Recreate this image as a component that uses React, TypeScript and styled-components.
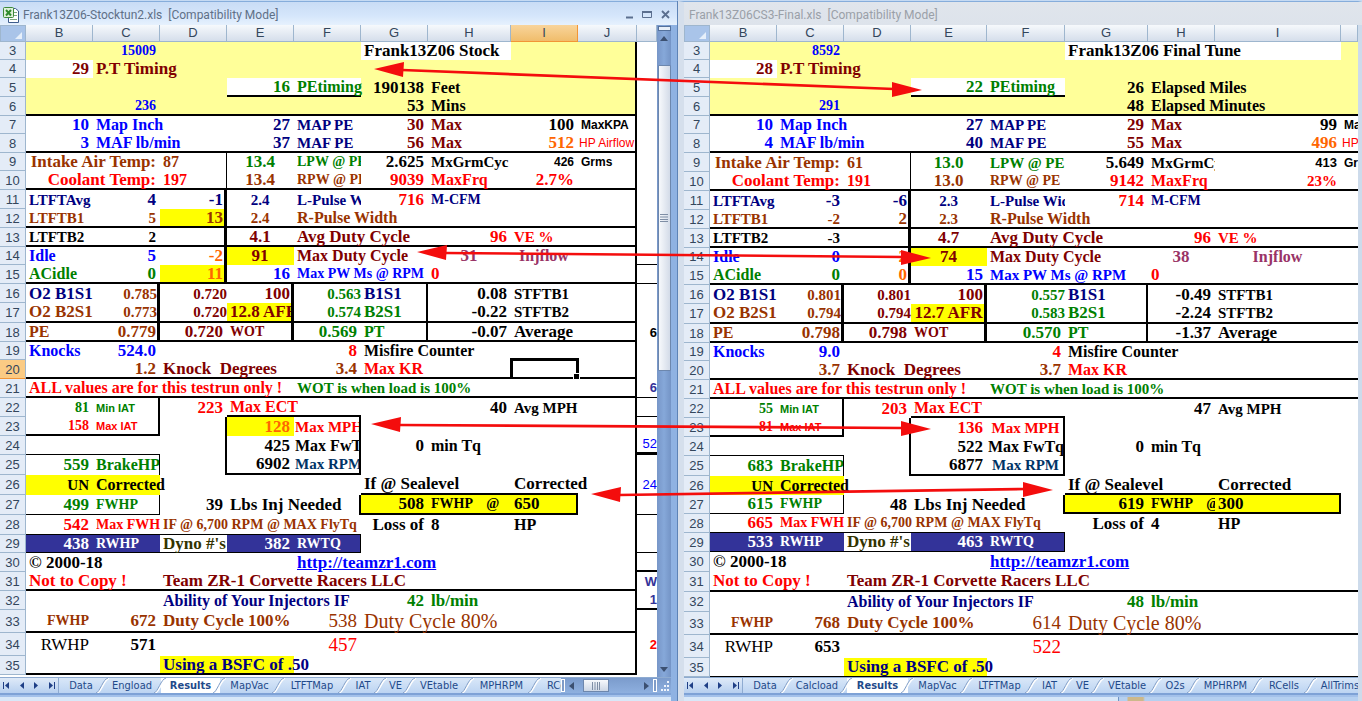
import React from 'react';
import styled, { createGlobalStyle, css } from 'styled-components';

const Global = createGlobalStyle`
  * { box-sizing: border-box; }
  html, body { margin: 0; padding: 0; background: #d5e5f7; }
  body { font-family: "DejaVu Sans Condensed", "DejaVu Sans", sans-serif; overflow: hidden; }
`;

/* ---------- palette ---------- */
const C = {
  blue: '#0000ff',
  navy: '#000080',
  deep: '#003366',
  maroon: '#800000',
  brown: '#993300',
  green: '#008000',
  red: '#ff0000',
  orange: '#ff6600',
  plum: '#993366',
  olive: '#333300',
  indigo: '#333399',
  black: '#000000',
  white: '#ffffff',
  pale: '#ffff99',
  yellow: '#ffff00',
};

/* ---------- sheet model ---------- */
type Align = 'left' | 'right' | 'center';
interface Cell {
  text: string;
  color: string;
  size: number;
  align: Align;
  weight?: number;
  sans?: boolean;
  clip?: boolean;
  span?: number;
  flush?: boolean;
  href?: string;
}
type Extra = Partial<Cell>;
interface Row {
  n: number;
  h: number;
  cells: Record<string, Cell>;
}
type Edge = [range: string, side: 'right' | 'bottom', width: number];
interface Sheet {
  columns: number[];
  rows: Row[];
  fills: [string, string][];
  edges: Edge[];
  selected?: string;
}

const num = (text: string, color = C.black, extra: Extra = {}): Cell => ({ text, color, size: 17, align: 'right', ...extra });
const txt = (text: string, color = C.black, extra: Extra = {}): Cell => ({ text, color, size: 16, align: 'left', ...extra });
const mid = (text: string, color = C.black, extra: Extra = {}): Cell => ({ text, color, size: 17, align: 'center', ...extra });

const LETTERS = 'BCDEFGHIJK';
const S17: Extra = { size: 17 };
const S15: Extra = { size: 15 };
const S14: Extra = { size: 14 };
const VOLT: Extra = { size: 15, flush: true };
const LABEL: Extra = { size: 11, sans: true };
const UNIT: Extra = { size: 12, sans: true, clip: true };
const THIN: Extra = { size: 12, sans: true, weight: 400, clip: true, flush: true };
const SIDE: Extra = { size: 13, sans: true, align: 'right', flush: true };
const BIG: Extra = { size: 19, weight: 400 };
const LINK = 'http://teamzr1.com';

const expand = (range: string): string[] => {
  const [a, b = a] = range.split(':');
  const out: string[] = [];
  for (let r = Number(a.slice(1)); r <= Number(b.slice(1)); r++) {
    for (let c = LETTERS.indexOf(a[0]); c <= LETTERS.indexOf(b[0]); c++) out.push(LETTERS[c] + r);
  }
  return out;
};

const buildRows = (heights: number[], data: Record<number, Record<string, Cell>>): Row[] =>
  heights.map((h, i) => ({ n: i + 3, h, cells: data[i + 3] || {} }));

const sharedFills: [string, string][] = [
  ['B3:J6', C.pale],
  ['B4', C.white],
  ['E5:F5', C.white],
  ['E14', C.yellow],
  ['E17', C.yellow],
  ['B26:C26', C.yellow],
  ['G27:I27', C.yellow],
  ['B29:C29', C.indigo],
  ['E29:F29', C.indigo],
  ['D35:E35', C.yellow],
];

const sharedEdges: Edge[] = [
  ['E5:F5', 'bottom', 2],
  ['B6:J6', 'bottom', 2],
  ['B8:J8', 'bottom', 2],
  ['D9:D10', 'right', 1],
  ['B10:J10', 'bottom', 2],
  ['D11:D15', 'right', 3],
  ['B12:J12', 'bottom', 2],
  ['B13:J13', 'bottom', 2],
  ['B15:J15', 'bottom', 2],
  ['C16:C18', 'right', 3],
  ['E16:E18', 'right', 3],
  ['G16:G18', 'right', 2],
  ['B17:J17', 'bottom', 2],
  ['B18:J18', 'bottom', 2],
  ['B20:J20', 'bottom', 2],
  ['B21:J21', 'bottom', 2],
  ['C22:C23', 'right', 2],
  ['E22:F22', 'bottom', 2],
  ['B23:C23', 'bottom', 2],
  ['D23:D25', 'right', 2],
  ['F23:F25', 'right', 2],
  ['E25:F25', 'bottom', 2],
  ['B24:C24', 'bottom', 1],
  ['C25', 'right', 1],
  ['C27', 'right', 1],
  ['B27:C27', 'bottom', 1],
  ['G26:I26', 'bottom', 2],
  ['F27', 'right', 2],
  ['G27:I27', 'bottom', 2],
  ['I27', 'right', 2],
  ['B28:F28', 'bottom', 1],
  ['B29:F29', 'bottom', 1],
  ['F29', 'right', 1],
  ['B31:J31', 'bottom', 2],
  ['B33:J33', 'bottom', 2],
];

const stock: Sheet = {
  columns: [67, 67, 67, 67, 67, 67, 83, 67, 59],
  selected: 'I20',
  fills: [...sharedFills, ['G3:H3', C.white], ['D12', C.yellow], ['D15', C.yellow], ['E23', C.yellow]],
  edges: [
    ...sharedEdges,
    ['J3:J35', 'right', 2],
    ['B35:J35', 'bottom', 2],
    ['K14:K15', 'bottom', 1],
    ['K21:K22', 'bottom', 1],
    ['K24', 'bottom', 3],
    ['K27', 'bottom', 1],
    ['K29', 'bottom', 1],
    ['K30', 'bottom', 2],
    ['K32', 'bottom', 2],
  ],
  rows: buildRows(
    [18, 18, 19, 19, 18, 19, 18, 19, 19, 19, 19, 18, 19, 19, 20, 19, 18, 19, 19, 19, 19, 19, 20, 20, 20, 20, 18, 19, 19, 19, 23, 23, 19],
    {
      3: { C: num('15009', C.blue, S14), G: txt('Frank13Z06 Stock', C.black, S17) },
      4: { B: num('29', C.maroon), C: txt('P.T Timing', C.maroon, S17) },
      5: { E: num('16', C.green), F: txt('PEtiming', C.green), G: num('190138'), H: txt('Feet') },
      6: { C: num('236', C.blue, S14), G: num('53'), H: txt('Mins') },
      7: { B: num('10', C.blue), C: txt('Map Inch', C.blue), E: num('27', C.navy), F: txt('MAP PE', C.navy, S15), G: num('30', C.maroon), H: txt('Max', C.maroon), I: num('100'), J: txt('MaxKPA', C.black, UNIT) },
      8: { B: num('3', C.blue), C: txt('MAF lb/min', C.blue), E: num('37', C.navy), F: txt('MAF PE', C.navy, S15), G: num('56', C.maroon), H: txt('Max', C.maroon), I: num('512', C.orange), J: txt('HP Airflow', C.red, THIN) },
      9: { B: num('Intake Air Temp:', C.brown, { span: 2 }), D: txt('87', C.brown), E: mid('13.4', C.green), F: txt('LPW @ PE', C.green, { size: 14, clip: true }), G: num('2.625'), H: txt('MxGrmCyc', C.black, S15), I: num('426', C.black, { size: 12, sans: true }), J: txt('Grms', C.black, UNIT) },
      10: { B: num('Coolant Temp:', C.red, { span: 2 }), D: txt('197', C.red), E: mid('13.4', C.brown), F: txt('RPW @ PE', C.brown, { size: 14, clip: true }), G: num('9039', C.red), H: txt('MaxFrq', C.red), I: num('2.7%', C.red) },
      11: { B: txt('LTFTAvg', C.navy, S15), C: num('4', C.navy), D: num('-1', C.navy), E: mid('2.4', C.navy, S15), F: txt('L-Pulse Width', C.navy, { size: 15, clip: true }), G: num('716', C.red), H: txt('M-CFM', C.navy, S14) },
      12: { B: txt('LTFTB1', C.brown, S15), C: num('5', C.brown, S15), D: num('13', C.brown), E: mid('2.4', C.brown, S15), F: txt('R-Pulse Width', C.brown) },
      13: { B: txt('LTFTB2', C.black, S15), C: num('2', C.black, S15), E: mid('4.1', C.maroon), F: txt('Avg Duty Cycle', C.maroon, S17), H: num('96', C.red), I: txt('VE %', C.red, S15) },
      14: { B: txt('Idle', C.blue), C: num('5', C.blue), D: num('-2', C.orange), E: mid('91', C.maroon), F: txt('Max Duty Cycle', C.maroon), H: mid('31', C.plum), I: mid('Injflow', C.plum, { size: 16 }) },
      15: { B: txt('ACidle', C.green), C: num('0', C.green), D: num('11', C.orange), E: num('16', C.blue), F: txt('Max PW Ms @ RPM', C.blue, S14), H: txt('0', C.red, S17) },
      16: { B: txt('O2 B1S1', C.navy, S17), C: num('0.785', C.brown, VOLT), D: num('0.720', C.maroon, VOLT), E: num('100', C.maroon), F: num('0.563', C.green, VOLT), G: txt('B1S1', C.navy, S17), H: num('0.08'), I: txt('STFTB1', C.black, S15) },
      17: { B: txt('O2 B2S1', C.brown, S17), C: num('0.773', C.brown, VOLT), D: num('0.720', C.maroon, VOLT), E: txt('12.8 AFR', C.maroon, { size: 17, clip: true }), F: num('0.574', C.green, VOLT), G: txt('B2S1', C.green, S17), H: num('-0.22'), I: txt('STFTB2', C.black, S15) },
      18: { B: txt('PE', C.brown), C: num('0.779', C.brown), D: num('0.720', C.maroon), E: txt('WOT', C.maroon, S14), F: num('0.569', C.green), G: txt('PT', C.green), H: num('-0.07'), I: txt('Average', C.black, S17), K: txt('6', C.black, SIDE) },
      19: { B: txt('Knocks', C.blue), C: num('524.0', C.blue), F: num('8', C.red), G: txt('Misfire Counter') },
      20: { C: num('1.2', C.brown), D: txt('Knock  Degrees', C.maroon, S17), F: num('3.4', C.brown), G: txt('Max KR', C.red) },
      21: { B: txt('ALL values are for this testrun only !', C.red), F: txt('WOT is when load is 100%', C.green, S15), K: txt('6', C.indigo, SIDE) },
      22: { B: num('81', C.green, S14), C: txt('Min IAT', C.green, LABEL), D: num('223', C.red), E: txt('Max ECT', C.red), H: num('40'), I: txt('Avg MPH', C.black, S15) },
      23: { B: num('158', C.red, S14), C: txt('Max IAT', C.red, LABEL), E: num('128', C.orange), F: txt('Max MPH', C.red, { size: 15, clip: true, flush: true }) },
      24: { E: num('425'), F: txt('Max FwTq', C.black, { clip: true, flush: true }), G: num('0'), H: txt('min Tq'), K: txt('52', C.blue, { ...SIDE, weight: 400 }) },
      25: { B: num('559', C.green), C: txt('BrakeHP', C.green, { clip: true }), E: num('6902'), F: txt('Max RPM', C.deep, { size: 15, clip: true, flush: true }) },
      26: { B: num('UN', C.black, S15), C: txt('Corrected'), G: txt('If @ Sealevel', C.black, S17), I: txt('Corrected', C.black, S17), K: txt('24', C.blue, { ...SIDE, weight: 400 }) },
      27: { B: num('499', C.green), C: txt('FWHP', C.green, S14), D: num('39'), E: txt('Lbs Inj Needed', C.black, S17), G: num('508'), H: txt('FWHP    @', C.black, S14), I: txt('650', C.black, S17) },
      28: { B: num('542', C.red), C: txt('Max FWH', C.red, { size: 14, clip: true }), D: txt('IF @ 6,700 RPM @ MAX FlyTq', C.brown, { size: 14, clip: true, span: 3 }), G: num('Loss of'), H: txt('8', C.black, S17), I: txt('HP') },
      29: { B: num('438', C.white), C: txt('RWHP', C.white, S14), D: txt("Dyno #'s", C.olive, { size: 17, clip: true }), E: num('382', C.white), F: txt('RWTQ', C.white, S14) },
      30: { B: txt('© 2000-18', C.black, S17), F: txt(LINK, C.blue, { size: 17, href: LINK }) },
      31: { B: txt('Not to Copy !', C.red, S17), D: txt('Team ZR-1 Corvette Racers LLC', C.maroon, S17), K: txt('W', C.indigo, SIDE) },
      32: { D: txt('Ability of Your Injectors IF', C.navy), G: num('42', C.green), H: txt('lb/min', C.green, S17), K: txt('1', C.indigo, SIDE) },
      33: { B: num('FWHP', C.brown, S14), C: num('672', C.brown), D: txt('Duty Cycle 100%', C.brown, S17), F: num('538', C.brown, BIG), G: txt('Duty Cycle 80%', C.brown, { size: 20, weight: 400 }) },
      34: { B: num('RWHP', C.black, { weight: 400 }), C: num('571'), F: num('457', C.red, BIG), K: txt('2', C.red, SIDE) },
      35: { D: txt('Using a BSFC of .50', C.navy, S17) },
    },
  ),
};

const final: Sheet = {
  columns: [67, 67, 67, 76, 78, 83, 67, 126],
  fills: [...sharedFills, ['G3:I3', C.white]],
  edges: [...sharedEdges, ['B35:J35', 'bottom', 1]],
  rows: buildRows(
    [18, 18, 19, 19, 18, 19, 19, 19, 19, 19, 19, 18, 19, 19, 20, 19, 18, 19, 19, 19, 19, 19, 20, 19, 19, 19, 19, 20, 20, 20, 23, 23, 19],
    {
      3: { C: num('8592', C.blue, S14), G: txt('Frank13Z06 Final Tune', C.black, S17) },
      4: { B: num('28', C.maroon), C: txt('P.T Timing', C.maroon, S17) },
      5: { E: num('22', C.green), F: txt('PEtiming', C.green), G: num('26'), H: txt('Elapsed Miles') },
      6: { C: num('291', C.blue, S14), G: num('48'), H: txt('Elapsed Minutes') },
      7: { B: num('10', C.blue), C: txt('Map Inch', C.blue), E: num('27', C.navy), F: txt('MAP PE', C.navy, S15), G: num('29', C.maroon), H: txt('Max', C.maroon), I: num('99'), J: txt('MaxKPA', C.black, UNIT) },
      8: { B: num('4', C.blue), C: txt('MAF lb/min', C.blue), E: num('40', C.navy), F: txt('MAF PE', C.navy, S15), G: num('55', C.maroon), H: txt('Max', C.maroon), I: num('496', C.orange), J: txt('HP Airflow', C.red, THIN) },
      9: { B: num('Intake Air Temp:', C.brown, { span: 2 }), D: txt('61', C.brown), E: mid('13.0', C.green), F: txt('LPW @ PE', C.green, S15), G: num('5.649'), H: txt('MxGrmCyc', C.black, { size: 15, clip: true }), I: num('413', C.black, { size: 13, sans: true }), J: txt('Grms', C.black, UNIT) },
      10: { B: num('Coolant Temp:', C.red, { span: 2 }), D: txt('191', C.red), E: mid('13.0', C.brown), F: txt('RPW @ PE', C.brown, S14), G: num('9142', C.red), H: txt('MaxFrq', C.red), I: num('23%', C.red, S15) },
      11: { B: txt('LTFTAvg', C.navy, S15), C: num('-3', C.navy), D: num('-6', C.navy), E: mid('2.3', C.navy, S15), F: txt('L-Pulse Width', C.navy, { size: 15, clip: true }), G: num('714', C.red), H: txt('M-CFM', C.navy, S14) },
      12: { B: txt('LTFTB1', C.brown, S15), C: num('-2', C.brown, S15), D: num('2', C.brown), E: mid('2.3', C.brown, S15), F: txt('R-Pulse Width', C.brown) },
      13: { B: txt('LTFTB2', C.black, S15), C: num('-3', C.black, S15), E: mid('4.7', C.maroon), F: txt('Avg Duty Cycle', C.maroon, S17), H: num('96', C.red), I: txt('VE %', C.red, S15) },
      14: { B: txt('Idle', C.blue), C: num('0', C.blue), D: num('2', C.orange), E: mid('74', C.maroon), F: txt('Max Duty Cycle', C.maroon), H: mid('38', C.plum), I: mid('Injflow', C.plum, { size: 16 }) },
      15: { B: txt('ACidle', C.green), C: num('0', C.green), D: num('0', C.orange), E: num('15', C.blue), F: txt('Max PW Ms @ RPM', C.blue, S15), H: txt('0', C.red, S17) },
      16: { B: txt('O2 B1S1', C.navy, S17), C: num('0.801', C.brown, VOLT), D: num('0.801', C.maroon, VOLT), E: num('100', C.maroon), F: num('0.557', C.green, VOLT), G: txt('B1S1', C.navy, S17), H: num('-0.49'), I: txt('STFTB1', C.black, S15) },
      17: { B: txt('O2 B2S1', C.brown, S17), C: num('0.794', C.brown, VOLT), D: num('0.794', C.maroon, VOLT), E: mid('12.7 AFR', C.maroon), F: num('0.583', C.green, VOLT), G: txt('B2S1', C.green, S17), H: num('-2.24'), I: txt('STFTB2', C.black, S15) },
      18: { B: txt('PE', C.brown), C: num('0.798', C.brown), D: num('0.798', C.maroon), E: txt('WOT', C.maroon, S14), F: num('0.570', C.green), G: txt('PT', C.green), H: num('-1.37'), I: txt('Average', C.black, S17) },
      19: { B: txt('Knocks', C.blue), C: num('9.0', C.blue), F: num('4', C.red), G: txt('Misfire Counter') },
      20: { C: num('3.7', C.brown), D: txt('Knock  Degrees', C.maroon, S17), F: num('3.7', C.brown), G: txt('Max KR', C.red) },
      21: { B: txt('ALL values are for this testrun only !', C.red), F: txt('WOT is when load is 100%', C.green, S15) },
      22: { B: num('55', C.green, S14), C: txt('Min IAT', C.green, LABEL), D: num('203', C.red), E: txt('Max ECT', C.red), H: num('47'), I: txt('Avg MPH', C.black, S15) },
      23: { B: num('81', C.red, S14), C: txt('Max IAT', C.red, LABEL), E: num('136', C.red), F: mid('Max MPH', C.red, S15) },
      24: { E: num('522'), F: txt('Max FwTq', C.black, { clip: true, flush: true }), G: num('0'), H: txt('min Tq') },
      25: { B: num('683', C.green), C: txt('BrakeHP', C.green, { clip: true }), E: num('6877'), F: mid('Max RPM', C.deep, S15) },
      26: { B: num('UN', C.black, S15), C: txt('Corrected'), G: txt('If @ Sealevel', C.black, S17), I: txt('Corrected', C.black, S17) },
      27: { B: num('615', C.green), C: txt('FWHP', C.green, S14), D: num('48'), E: txt('Lbs Inj Needed', C.black, S17), G: num('619'), H: txt('FWHP    @', C.black, { size: 14, clip: true }), I: txt('300', C.black, S17) },
      28: { B: num('665', C.red), C: txt('Max FWH', C.red, { size: 14, clip: true }), D: txt('IF @ 6,700 RPM @ MAX FlyTq', C.brown, { size: 14, clip: true, span: 3 }), G: num('Loss of'), H: txt('4', C.black, S17), I: txt('HP') },
      29: { B: num('533', C.white), C: txt('RWHP', C.white, S14), D: txt("Dyno #'s", C.olive, { size: 17, clip: true }), E: num('463', C.white), F: txt('RWTQ', C.white, S14) },
      30: { B: txt('© 2000-18', C.black, S17), F: txt(LINK, C.blue, { size: 17, href: LINK }) },
      31: { B: txt('Not to Copy !', C.red, S17), D: txt('Team ZR-1 Corvette Racers LLC', C.maroon, S17) },
      32: { D: txt('Ability of Your Injectors IF', C.navy), G: num('48', C.green), H: txt('lb/min', C.green, S17) },
      33: { B: num('FWHP', C.brown, S14), C: num('768', C.brown), D: txt('Duty Cycle 100%', C.brown, S17), F: num('614', C.brown, BIG), G: txt('Duty Cycle 80%', C.brown, { size: 20, weight: 400 }) },
      34: { B: num('RWHP', C.black, { weight: 400 }), C: num('653'), F: num('522', C.red, BIG) },
      35: { D: txt('Using a BSFC of .50', C.navy, S17) },
    },
  ),
};

/* ---------- window chrome ---------- */
const Desktop = styled.main`
  position: relative;
  display: grid;
  grid-template-columns: minmax(0, 678fr) minmax(0, 684fr);
  border-top: 1px solid #c5daf3;
  overflow: hidden;
`;

const Book = styled.section<{ $active?: boolean }>`
  display: flex;
  flex-direction: column;
  min-width: 0;
  border-top: 1px solid #86addb;
  border-left: ${(p) => (p.$active ? 0 : 6)}px solid #d5dfec;
  border-right: ${(p) => (p.$active ? '7px solid #8fb2e2' : '4px solid #cddbeb')};
  background: #c9dbf0;
  box-shadow: ${(p) => (p.$active ? 'none' : '-1px 0 0 #5d83b6')};
`;

const TitleBar = styled.header<{ $active?: boolean }>`
  display: flex;
  align-items: center;
  gap: 4px;
  height: 23px;
  padding: 2px 6px 0 ${(p) => (p.$active ? 3 : 5)}px;
  margin-right: ${(p) => (p.$active ? -7 : -4)}px;
  background: ${(p) => (p.$active ? 'linear-gradient(#c9dcf5, #d5e6fb 60%, #e6f1fd)' : 'linear-gradient(#e0e5ec, #dde3eb)')};
  color: ${(p) => (p.$active ? '#5f7087' : '#9aa0a8')};
  font: 12px/16px Roboto, sans-serif;
  white-space: pre;
`;

const Title = styled.h1`
  flex: 1;
  margin: 0;
  font: inherit;
`;

const TitleButton = styled.button`
  display: flex;
  width: 14px;
  height: 16px;
  padding: 0;
  border: 0;
  background: none;
  align-items: center;
  justify-content: center;
`;

const Body = styled.div`
  display: flex;
  min-width: 0;
`;

const GridArea = styled.div<{ $pad?: number }>`
  flex: 1;
  min-width: 0;
  padding-bottom: ${(p) => p.$pad || 0}px;
  overflow: hidden;
  background: #fff;
`;

const Grid = styled.table`
  width: 100%;
  table-layout: fixed;
  border-collapse: separate;
  border-spacing: 0;
`;

const headFace = css`
  padding: 0;
  font: 13px/14px "Liberation Sans", Arial, sans-serif;
  color: #33465c;
  text-align: center;
  vertical-align: middle;
`;

const Corner = styled.td`
  height: 17px;
  padding: 0;
  border: 1px solid #9eb6ce;
  background: #a9c4e9;
  text-align: right;
  vertical-align: bottom;
  line-height: 0;
`;

const ColHead = styled.th<{ $on?: boolean }>`
  ${headFace}
  height: 17px;
  border-right: 1px solid ${(p) => (p.$on ? '#f29536' : '#9eb6ce')};
  border-bottom: 1px solid ${(p) => (p.$on ? '#f29536' : '#9eb6ce')};
  background: ${(p) => (p.$on ? 'linear-gradient(#f8d49b, #f0bd6b)' : 'linear-gradient(#f6f9fc, #d5deeb)')};
`;

const RowHead = styled.th<{ $on?: boolean }>`
  ${headFace}
  padding-top: 1px;
  border-right: 1px solid #9eb6ce;
  border-bottom: 1px solid ${(p) => (p.$on ? '#f29536' : '#9eb6ce')};
  background: ${(p) => (p.$on ? '#fbcb84' : '#e4ecf7')};
`;

const Line = styled.tr<{ $h: number }>`
  height: ${(p) => p.$h}px;
`;

const endPad = (cell: Cell | undefined, border: number) =>
  cell?.flush || cell?.clip ? 0 : Math.max(0, 4 - border);

const DataCell = styled.td<{ $fill?: string; $right: number; $bottom: number; $cell?: Cell }>`
  padding: 0 ${(p) => endPad(p.$cell, p.$right)}px 0 ${(p) => (p.$cell?.flush ? 1 : 3)}px;
  border: 0 solid #000;
  border-right-width: ${(p) => p.$right}px;
  border-bottom-width: ${(p) => p.$bottom}px;
  background: ${(p) => p.$fill || 'transparent'};
  color: ${(p) => p.$cell?.color || '#000'};
  font-family: ${(p) => (p.$cell?.sans ? '"Liberation Sans", Arial, sans-serif' : '"Liberation Serif", "Times New Roman", serif')};
  font-size: ${(p) => p.$cell?.size || 16}px;
  font-weight: ${(p) => p.$cell?.weight || 700};
  line-height: 14px;
  text-align: ${(p) => p.$cell?.align || 'left'};
  vertical-align: middle;
  white-space: pre;
`;

const Clip = styled.div`
  overflow-x: clip;
`;

const CellLink = styled.a`
  color: inherit;
  text-decoration: underline;
`;

const Anchor = styled.td`
  position: relative;
  padding: 0;
  border-bottom: 2px solid #000;
`;

const Selection = styled.div`
  position: absolute;
  inset: -2px -1px -2px -1px;
  border: 3px solid #000;
  border-bottom-width: 2px;

  &::after {
    content: '';
    position: absolute;
    right: -4px;
    bottom: -3px;
    width: 5px;
    height: 5px;
    border: 1px solid #fff;
    background: #000;
  }
`;

const VScroll = styled.div`
  display: flex;
  flex-direction: column;
  align-items: center;
  width: 14px;
  background: linear-gradient(90deg, #7796c8, #86a8d9 50%, #7494c6);
`;

const SplitBox = styled.div`
  width: 13px;
  height: 5px;
  margin-top: 1px;
  border: 1px solid #54719c;
  background: #e8eff8;
`;

const ScrollArrow = styled.button`
  display: flex;
  align-items: center;
  justify-content: center;
  width: 14px;
  height: 16px;
  padding: 0;
  border: 0;
  background: none;
`;

const VThumb = styled.div`
  display: flex;
  align-items: center;
  justify-content: center;
  width: 13px;
  height: 306px;
  margin-top: 18px;
  border: 1px solid #6d87ad;
  border-radius: 1px;
  background: linear-gradient(90deg, #f7f9fc, #d3dbe8);
`;

const Spacer = styled.div`
  flex: 1;
`;

const TabBar = styled.nav`
  display: flex;
  height: 18px;
  border-top: 1px solid #8eabd1;
  border-bottom: 2px solid #7ea2d6;
  background: linear-gradient(#dfeaf8, #b6cfef);
  overflow: hidden;
`;

const NavSet = styled.div`
  display: flex;
  flex: none;
  align-items: center;
  justify-content: space-around;
  width: 59px;
  border-right: 1px solid #8eabd1;
`;

const NavButton = styled.button`
  display: flex;
  padding: 0;
  border: 0;
  background: none;
`;

const Tabs = styled.div`
  display: flex;
  flex: 1;
  min-width: 0;
  overflow: hidden;
`;

const Tab = styled.button<{ $w: number; $on?: boolean }>`
  position: relative;
  flex: none;
  width: ${(p) => p.$w}px;
  padding: 0;
  border: 0;
  background: ${(p) => (p.$on ? '#fff' : 'linear-gradient(#d9e7f8, #bcd4f2)')};
  color: #1f4a8a;
  font: ${(p) => (p.$on ? 700 : 400)} 11px/15px "DejaVu Sans Condensed", "DejaVu Sans", sans-serif;
  text-align: center;
  white-space: nowrap;

  svg {
    position: absolute;
    right: -7px;
    top: 0;
    z-index: 1;
  }
`;

const HScroll = styled.div`
  display: flex;
  flex: none;
  align-items: center;
  width: 110px;
  background: linear-gradient(#7b9bcc, #8eb0df);
`;

const HSplit = styled.div`
  width: 4px;
  height: 13px;
  border: 1px solid #fff;
  background: #7f9cc8;
`;

const HThumb = styled.div`
  display: flex;
  align-items: center;
  justify-content: center;
  width: 26px;
  height: 13px;
  margin-left: 4px;
  border: 1px solid #6d87ad;
  background: linear-gradient(#f7f9fc, #ccd6e5);
`;

const Foot = styled.footer`
  display: flex;
  justify-content: flex-end;
  height: 7px;
  border-top: 2px solid #a3c1ea;
  background: #d8e8f8;
`;

const FootPane = styled.div`
  width: 240px;
  border-left: 1px solid #6f93c4;
  background: linear-gradient(90deg, #b5d0f0 8px, #cdb88a 9px, #cdb88a 24px, #b5d0f0 26px);
`;

const Overlay = styled.svg`
  position: absolute;
  left: 0;
  top: -1px;
  pointer-events: none;
`;

/* ---------- small drawings ---------- */
const ExcelIcon = () => (
  <svg width="16" height="16" viewBox="0 0 16 16" aria-hidden="true">
    <path d="M5.500 1.500h7l3 2.500v11.500h-10z" fill="#fff" stroke="#3d5c8c" />
    <path d="M11 5.500h3M11 8.500h3M7 12.500h7" stroke="#7aa57c" />
    <rect x="0.500" y="0.500" width="10" height="10" rx="1" fill="#dff0da" stroke="#3f8a3a" />
    <path d="M3 3l5 5.500M8 3l-5 5.500" stroke="#2f8a2c" strokeWidth="2" />
  </svg>
);

const Triangle = ({ dir }: { dir: 'up' | 'down' | 'left' | 'right' }) => {
  const points = { up: '0,6 4,1 8,6', down: '0,2 4,7 8,2', left: '6,0 1,4 6,8', right: '2,0 7,4 2,8' }[dir];
  return (
    <svg width="8" height="8" viewBox="0 0 8 8" aria-hidden="true">
      <polygon points={points} fill="#3c5071" />
    </svg>
  );
};

const NavGlyph = ({ dir, end }: { dir: 'left' | 'right'; end?: boolean }) => (
  <svg width="8" height="7" viewBox="0 0 8 7" aria-hidden="true">
    <polygon points={dir === 'left' ? '6,0 2,3.500 6,7' : '2,0 6,3.500 2,7'} fill="#1f3f86" />
    {end && <rect x={dir === 'left' ? 0 : 7} y="0" width="1" height="7" fill="#1f3f86" />}
  </svg>
);

const Slash = () => (
  <svg width="14" height="15" viewBox="0 0 14 15" aria-hidden="true">
    <path d="M1 15C5 14 8 1 13 0" fill="none" stroke="#fff" strokeWidth="2" />
    <path d="M0 15C4 14 7 1 12 0" fill="none" stroke="#7d9cc7" />
  </svg>
);

const Ridges = ({ vertical }: { vertical?: boolean }) => (
  <svg width="8" height="8" viewBox="0 0 8 8" aria-hidden="true">
    <path d={vertical ? 'M0.500 0v8M3 0v8M5.500 0v8M7.500 0v8' : 'M0 0.500h8M0 3h8M0 5.500h8M0 7.500h8'} stroke="#7f8ea5" />
  </svg>
);

/* ---------- arrows that link the two sheets ---------- */
const ARROWS = [
  { x1: 374, y1: 69, x2: 922, y2: 90 },
  { x1: 417, y1: 252, x2: 931, y2: 258 },
  { x1: 371, y1: 424, x2: 931, y2: 429 },
  { x1: 591, y1: 494, x2: 1053, y2: 490 },
];

const Arrows = () => (
  <Overlay width="1362" height="701" viewBox="0 0 1362 701" aria-hidden="true">
    {ARROWS.map(({ x1, y1, x2, y2 }) => (
      <g key={y1} fill="#f40d0d" stroke="none">
        <line x1={x1 + 28} y1={y1 + 1} x2={x2 - 28} y2={y2 - 1} stroke="#f40d0d" strokeWidth="2.600" />
        <polygon points={`${x1},${y1} ${x1 + 30},${y1 - 7} ${x1 + 29},${y1 + 8}`} />
        <polygon points={`${x2},${y2} ${x2 - 30},${y2 - 8} ${x2 - 30},${y2 + 7}`} />
      </g>
    ))}
  </Overlay>
);

/* ---------- sheet ---------- */
const SheetGrid = ({ sheet, label }: { sheet: Sheet; label: string }) => {
  const letters = LETTERS.slice(0, sheet.columns.length + 1).split('');
  const fill: Record<string, string> = {};
  sheet.fills.forEach(([range, color]) => expand(range).forEach((k) => (fill[k] = color)));
  const edge: Record<string, number> = {};
  sheet.edges.forEach(([range, side, w]) => expand(range).forEach((k) => (edge[k + side] = w)));
  const sel = sheet.selected;

  return (
    <Grid aria-label={label}>
      <colgroup>
        <col style={{ width: 26 }} />
        {sheet.columns.map((w, i) => (
          <col key={i} style={{ width: w }} />
        ))}
        <col />
      </colgroup>
      <thead>
        <tr>
          <Corner>
            <svg width="10" height="10" viewBox="0 0 10 10" aria-hidden="true">
              <polygon points="7,1 7,8 0,8" fill="#e6effa" />
            </svg>
          </Corner>
          {letters.map((l, i) => (
            <ColHead key={l} scope="col" $on={sel?.[0] === l}>
              {i < sheet.columns.length ? l : ''}
            </ColHead>
          ))}
        </tr>
      </thead>
      <tbody>
        {sheet.rows.map((row) => {
          let skip = 0;
          return (
            <Line key={row.n} $h={row.h}>
              <RowHead scope="row" $on={sel === `I${row.n}`}>
                {row.n}
              </RowHead>
              {letters.map((l, i) => {
                if (skip > 0) {
                  skip -= 1;
                  return null;
                }
                const key = l + row.n;
                if (key === sel) {
                  return (
                    <Anchor key={l}>
                      <Selection />
                    </Anchor>
                  );
                }
                const cell = row.cells[l];
                const span = cell?.span || 1;
                skip = span - 1;
                const last = letters[i + span - 1] + row.n;
                const content = cell?.href ? <CellLink href={cell.href}>{cell.text}</CellLink> : cell?.text;
                return (
                  <DataCell
                    key={l}
                    colSpan={span}
                    $cell={cell}
                    $fill={fill[key]}
                    $right={edge[last + 'right'] || 0}
                    $bottom={edge[key + 'bottom'] || 0}
                  >
                    {cell?.clip ? <Clip>{content}</Clip> : content}
                  </DataCell>
                );
              })}
            </Line>
          );
        })}
      </tbody>
    </Grid>
  );
};

type TabDef = [name: string, width: number];

const SheetTabs = ({ tabs, children }: { tabs: TabDef[]; children?: React.ReactNode }) => (
  <TabBar aria-label="Sheet tabs">
    <NavSet>
      <NavButton aria-label="First sheet"><NavGlyph dir="left" end /></NavButton>
      <NavButton aria-label="Previous sheet"><NavGlyph dir="left" /></NavButton>
      <NavButton aria-label="Next sheet"><NavGlyph dir="right" /></NavButton>
      <NavButton aria-label="Last sheet"><NavGlyph dir="right" end /></NavButton>
    </NavSet>
    <Tabs>
      {tabs.map(([name, w]) => (
        <Tab key={name} $w={w} $on={name === 'Results'}>
          {name}
          <Slash />
        </Tab>
      ))}
    </Tabs>
    {children}
  </TabBar>
);

const STOCK_TABS: TabDef[] = [
  ['Data', 44], ['Engload', 58], ['Results', 59], ['MapVac', 59], ['LTFTMap', 66],
  ['IAT', 36], ['VE', 29], ['VEtable', 58], ['MPHRPM', 67], ['RCells', 54],
];
const FINAL_TABS: TabDef[] = [
  ['Data', 44], ['Calcload', 60], ['Results', 61], ['MapVac', 59], ['LTFTMap', 65], ['IAT', 35],
  ['VE', 31], ['VEtable', 58], ['O2s', 38], ['MPHRPM', 63], ['RCells', 54], ['AllTrims', 58],
];

export default function App() {
  return (
    <>
      <Global />
      <Desktop>
        <Book $active>
          <TitleBar $active>
            <ExcelIcon />
            <Title>Frank13Z06-Stocktun2.xls  [Compatibility Mode]</Title>
            <TitleButton aria-label="Minimize">
              <svg width="9" height="9" viewBox="0 0 9 9"><path d="M1 7.500h7" stroke="#5b6f8f" strokeWidth="2" /></svg>
            </TitleButton>
            <TitleButton aria-label="Maximize">
              <svg width="10" height="9" viewBox="0 0 10 9"><path d="M0.500 1.500h9v6h-9z" fill="none" stroke="#5b6f8f" /><path d="M0 2h10" stroke="#5b6f8f" strokeWidth="2" /></svg>
            </TitleButton>
            <TitleButton aria-label="Close">
              <svg width="9" height="9" viewBox="0 0 9 9"><path d="M1 1l7 7M8 1l-7 7" stroke="#5b6f8f" strokeWidth="1.800" /></svg>
            </TitleButton>
          </TitleBar>
          <Body>
            <GridArea $pad={2}>
              <SheetGrid sheet={stock} label="Frank13Z06 Stock" />
            </GridArea>
            <VScroll>
              <SplitBox />
              <ScrollArrow aria-label="Scroll up"><Triangle dir="up" /></ScrollArrow>
              <VThumb><Ridges /></VThumb>
              <Spacer />
              <ScrollArrow aria-label="Scroll down"><Triangle dir="down" /></ScrollArrow>
            </VScroll>
          </Body>
          <SheetTabs tabs={STOCK_TABS}>
            <HScroll>
              <HSplit />
              <ScrollArrow aria-label="Scroll left"><Triangle dir="left" /></ScrollArrow>
              <HThumb><Ridges vertical /></HThumb>
              <Spacer />
              <ScrollArrow aria-label="Scroll right"><Triangle dir="right" /></ScrollArrow>
              <HSplit />
              <svg width="14" height="14" viewBox="0 0 14 14" aria-hidden="true">
                <path d="M10 3h2M7 7h2M10 7h2M4 11h2M7 11h2M10 11h2" stroke="#eef4fc" strokeWidth="2" />
              </svg>
            </HScroll>
          </SheetTabs>
          <Foot />
        </Book>
        <Book>
          <TitleBar>
            <Title>Frank13Z06CS3-Final.xls  [Compatibility Mode]</Title>
          </TitleBar>
          <Body>
            <GridArea>
              <SheetGrid sheet={final} label="Frank13Z06 Final Tune" />
            </GridArea>
          </Body>
          <SheetTabs tabs={FINAL_TABS} />
          <Foot>
            <FootPane />
          </Foot>
        </Book>
        <Arrows />
      </Desktop>
    </>
  );
}
